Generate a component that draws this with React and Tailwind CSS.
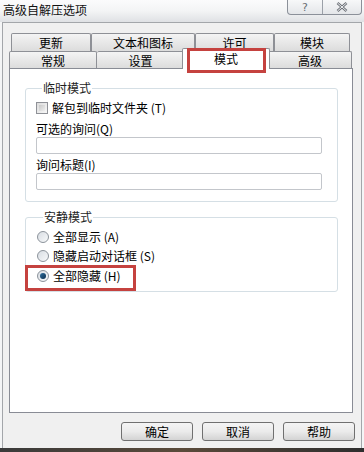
export default function App() {
  const row1 = [
    { label: "更新", w: "w-[80px]" },
    { label: "文本和图标", w: "w-[104px]" },
    { label: "许可", w: "w-[79px]" },
    { label: "模块", w: "w-[76px]" },
  ];

  return (
    <div className="relative w-[364px] h-[452px] overflow-hidden bg-[#f4f5f6] flex flex-col text-[12px] leading-[16px] text-black font-['Noto_Sans_CJK_SC','Noto_Sans_CJK_JP',sans-serif]">
      {/* title bar */}
      <div className="h-[22px] shrink-0 flex items-start justify-between bg-gradient-to-b from-[#fbfbfc] via-[#f3f4f5] to-[#dfe1e4]">
        <span className="pl-[3px] pt-[2px] text-[12px] leading-[16px] text-[#111]">高级自解压选项</span>
        <div className="flex h-[15px] mr-[2px] border border-t-0 border-[#8b9099] rounded-b-[4px] bg-gradient-to-b from-[#f7f8f9] to-[#e4e6e9]">
          <div className="w-[35px] border-r border-[#9ba0a8] flex items-center justify-center text-[11px] leading-[11px] text-[#6b6f75] font-['DejaVu_Sans',sans-serif]">?</div>
          <div className="w-[38px] flex items-center justify-center">
            <svg width="12" height="10" viewBox="0 0 12 10">
              <path d="M1.5 1 L10.5 9 M10.5 1 L1.5 9" stroke="#6d7178" strokeWidth="2.6" />
              <path d="M1.5 1 L10.5 9 M10.5 1 L1.5 9" stroke="#eef0f2" strokeWidth="1" />
            </svg>
          </div>
        </div>
      </div>

      {/* client area */}
      <div className="flex-1 mx-[2px] border border-b-0 border-[#a3a6aa] bg-[#f0f0f0] flex flex-col">
        <div className="mt-[10px] ml-[6px] w-[344px] flex flex-col">
          <div className="flex ml-[2px] h-[18px]">
            {row1.map((t) => (
              <div
                key={t.label}
                className={`${t.w} h-[18px] border border-b-0 border-[#8e9096] rounded-t-[2px] bg-gradient-to-b from-[#f4f4f4] to-[#dcdcdc] text-center pt-[1px]`}
              >
                {t.label}
              </div>
            ))}
          </div>
          <div className="flex items-end h-[17px]">
            <div className="w-[88px] h-[17px] border border-b-0 border-[#8e9096] rounded-t-[2px] bg-gradient-to-b from-[#f4f4f4] to-[#dcdcdc] text-center pt-[1px]">常规</div>
            <div className="w-[88px] h-[17px] border border-b-0 border-l-0 border-[#8e9096] rounded-t-[2px] bg-gradient-to-b from-[#f4f4f4] to-[#dcdcdc] text-center pt-[1px]">设置</div>
            <div className="relative z-10 -ml-[3px] w-[88px] h-[21px] -mb-[1px] border border-b-0 border-[#8e9096] rounded-t-[2px] bg-white text-center pt-[2px]">模式</div>
            <div className="-ml-[2px] w-[84px] h-[17px] border border-b-0 border-[#8e9096] rounded-t-[2px] bg-gradient-to-b from-[#f4f4f4] to-[#dcdcdc] text-center pt-[1px]">高级</div>
          </div>

          {/* panel */}
          <div className="h-[345px] border border-[#898c95] bg-white pl-[15px] pr-[14px] pt-[11px] flex flex-col">
            <fieldset className="border border-[#d5dfe5] rounded-[3px] pl-[10px] pr-[15px] pb-[11px] flex flex-col">
              <legend className="ml-[6px] px-[1px] h-[16px] text-[#1e1e1e]">临时模式</legend>
              <div className="mt-[4px] h-[16px] flex items-center">
                <span className="w-[12px] h-[12px] border border-[#8f9197] bg-gradient-to-br from-[#dcdcdc] to-[#f7f7f7] p-[2px] flex">
                  <span className="flex-1 bg-gradient-to-br from-[#c9c9c9] to-[#eeeeee]" />
                </span>
                <span className="ml-[4px]">解包到临时文件夹 (T)</span>
              </div>
              <div className="mt-[5px] h-[16px]">可选的询问(Q)</div>
              <div className="h-[17px] border border-[#c3c6cb] rounded-[2px] bg-white" />
              <div className="mt-[3px] h-[16px]">询问标题(I)</div>
              <div className="h-[17px] border border-[#c3c6cb] rounded-[2px] bg-white" />
            </fieldset>

            <fieldset className="mt-[7px] border border-[#d5dfe5] rounded-[3px] pl-[11px] pr-[15px] pb-[5px] flex flex-col">
              <legend className="ml-[6px] px-[1px] h-[16px] text-[#1e1e1e]">安静模式</legend>
              {[
                { label: "全部显示 (A)", on: false },
                { label: "隐藏启动对话框 (S)", on: false },
                { label: "全部隐藏 (H)", on: true },
              ].map((r, i) => (
                <div key={r.label} className={`${i === 0 ? "mt-[2px] h-[19px]" : "h-[20px]"} flex items-center`}>
                  <span className="w-[12px] h-[12px] rounded-full border border-[#8c939b] bg-gradient-to-br from-[#d8dde3] to-[#f8f9fa] flex items-center justify-center">
                    {r.on && <span className="w-[6px] h-[6px] rounded-full bg-gradient-to-br from-[#2f6f9f] to-[#0d2f4f]" />}
                  </span>
                  <span className="ml-[4px]">{r.label}</span>
                </div>
              ))}
            </fieldset>
          </div>
        </div>

        {/* buttons */}
        <div className="mt-[9px] flex justify-end gap-[9px] pr-[6px]">
          {["确定", "取消", "帮助"].map((b) => (
            <div
              key={b}
              className="w-[72px] h-[19px] border border-[#707070] rounded-[3px] bg-gradient-to-b from-[#f4f4f4] via-[#ebebeb] to-[#d3d3d3] text-center leading-[17px]"
            >
              {b}
            </div>
          ))}
        </div>
      </div>
      <div className="h-[4px] shrink-0 bg-gradient-to-r from-[#3a3a3a] via-[#5a4a3a] to-[#2e2e2e]" />

      {/* red highlight boxes */}
      <div className="absolute left-[187px] top-[48px] w-[79px] h-[25px] border-[3px] border-[#c5423f] z-20" />
      <div className="absolute left-[25px] top-[265px] w-[111px] h-[26px] border-[3px] border-[#c5423f] z-20" />
    </div>
  );
}
